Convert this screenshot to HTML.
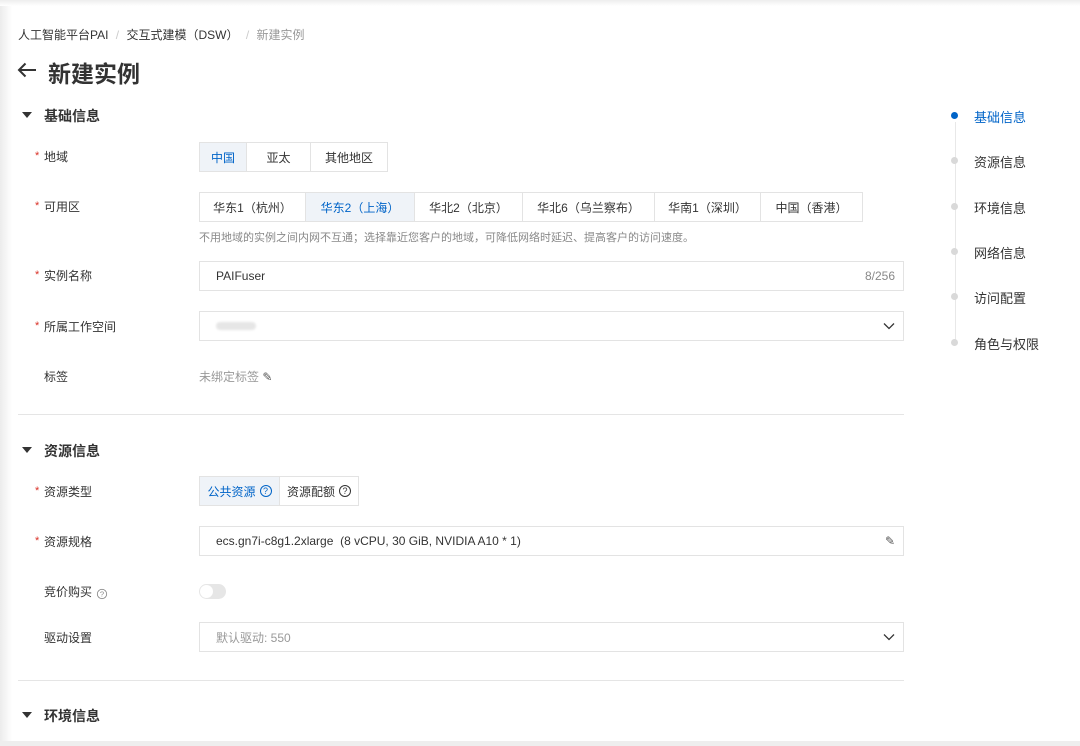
<!DOCTYPE html>
<html><head><meta charset="utf-8"><style>
*{margin:0;padding:0;box-sizing:border-box}
body{width:1080px;height:746px;overflow:hidden;background:#fff;font-family:"Liberation Sans","Noto Sans CJK SC",sans-serif;color:#333;position:relative;font-size:12px}
.a{position:absolute;white-space:nowrap}
.lbl{position:absolute;left:44px;font-size:12px;color:#333}
.star{position:absolute;left:35px;color:#d93026;font-size:11px}
.sec{position:absolute;left:44px;font-size:14px;font-weight:bold;color:#333}
.tri{position:absolute;left:22px;width:0;height:0;border-left:5px solid transparent;border-right:5px solid transparent;border-top:6px solid #333}
.seg{position:absolute;display:flex;height:30px;border:1px solid #e3e3e3}
.seg div{border-right:1px solid #e3e3e3;display:flex;align-items:center;justify-content:center;font-size:12px;color:#333}
.seg div:last-child{border-right:none}
.seg .on{background:#eff3f8;color:#0064c8}
.inp{position:absolute;left:199px;width:705px;height:30px;border:1px solid #e3e3e3;font-size:12px;padding-left:16px;display:flex;align-items:center}
.hr{position:absolute;left:18px;width:886px;height:1px;background:#e5e5e5}
.nav{position:absolute;left:974px;font-size:13px;color:#333}
.dot{position:absolute;left:951px;width:7px;height:7px;border-radius:50%;background:#d9d9d9}
.q{display:inline-block;width:12px;height:12px;border:1px solid currentColor;border-radius:50%;font-size:9px;line-height:10px;text-align:center;margin-left:4px;vertical-align:-1px}
</style></head><body>
<div class="a" style="left:0;top:0;width:12px;height:746px;background:linear-gradient(90deg,#ececec,#fff)"></div>
<div class="a" style="left:0;top:0;width:1080px;height:6px;background:linear-gradient(#eee,#fff)"></div>
<div class="a" style="left:18px;top:26px;font-size:12px;color:#333">人工智能平台PAI <span style="color:#ccc;margin:0 4px">/</span> 交互式建模（DSW） <span style="color:#ccc;margin:0 4px">/</span> <span style="color:#999">新建实例</span></div>
<svg class="a" style="left:17px;top:62px" width="20" height="16" viewBox="0 0 20 16"><path d="M19 8H2M8.5 1.5L2 8l6.5 6.5" fill="none" stroke="#333" stroke-width="2"/></svg>
<div class="a" style="left:48px;top:55px;font-size:23px;font-weight:bold;color:#333">新建实例</div>

<div class="tri" style="top:112px"></div><div class="sec" style="top:106px">基础信息</div>
<div class="star" style="top:150px">*</div><div class="lbl" style="top:148px">地域</div>
<div class="seg" style="left:199px;top:142px"><div class="on" style="width:47px">中国</div><div style="width:64px">亚太</div><div style="width:76px">其他地区</div></div>
<div class="star" style="top:200px">*</div><div class="lbl" style="top:198px">可用区</div>
<div class="seg" style="left:199px;top:192px"><div style="width:106px">华东1（杭州）</div><div class="on" style="width:109px">华东2（上海）</div><div style="width:108px">华北2（北京）</div><div style="width:132px">华北6（乌兰察布）</div><div style="width:106px">华南1（深圳）</div><div style="width:101px">中国（香港）</div></div>
<div class="a" style="left:199px;top:229px;font-size:11px;color:#888">不用地域的实例之间内网不互通；选择靠近您客户的地域，可降低网络时延迟、提高客户的访问速度。</div>
<div class="star" style="top:269px">*</div><div class="lbl" style="top:267px">实例名称</div>
<div class="inp" style="top:261px">PAIFuser<span style="position:absolute;right:8px;color:#888">8/256</span></div>
<div class="star" style="top:320px">*</div><div class="lbl" style="top:318px">所属工作空间</div>
<div class="inp" style="top:311px"><span style="display:inline-block;width:40px;height:8px;background:#e6e6e6;border-radius:4px;filter:blur(1px)"></span><svg style="position:absolute;right:8px" width="12" height="8" viewBox="0 0 12 8"><path d="M1 1.5l5 5 5-5" fill="none" stroke="#333" stroke-width="1.3"/></svg></div>
<div class="lbl" style="top:368px">标签</div>
<div class="a" style="left:199px;top:368px;font-size:12px;color:#999">未绑定标签 <span style="color:#555">✎</span></div>
<div class="hr" style="top:414px"></div>

<div class="tri" style="top:447px"></div><div class="sec" style="top:441px">资源信息</div>
<div class="star" style="top:485px">*</div><div class="lbl" style="top:483px">资源类型</div>
<div class="seg" style="left:199px;top:476px"><div class="on" style="width:80px">公共资源<span class="q">?</span></div><div style="width:78px">资源配额<span class="q">?</span></div></div>
<div class="star" style="top:535px">*</div><div class="lbl" style="top:533px">资源规格</div>
<div class="inp" style="top:526px">ecs.gn7i-c8g1.2xlarge&nbsp;&nbsp;(8 vCPU, 30 GiB, NVIDIA A10 * 1)<span style="position:absolute;right:8px;color:#555">✎</span></div>
<div class="lbl" style="top:583px">竞价购买<span class="q" style="color:#888;transform:scale(.85)">?</span></div>
<div class="a" style="left:199px;top:584px;width:27px;height:15px;border-radius:8px;background:#e6e6e6"><div style="position:absolute;left:1px;top:1px;width:13px;height:13px;border-radius:50%;background:#fff"></div></div>
<div class="lbl" style="top:629px">驱动设置</div>
<div class="inp" style="top:622px;color:#999">默认驱动: 550<svg style="position:absolute;right:8px" width="12" height="8" viewBox="0 0 12 8"><path d="M1 1.5l5 5 5-5" fill="none" stroke="#333" stroke-width="1.3"/></svg></div>
<div class="hr" style="top:680px"></div>
<div class="tri" style="top:712px"></div><div class="sec" style="top:706px">环境信息</div>
<div class="a" style="left:0;top:741px;width:1080px;height:5px;background:#eee"></div>

<div class="a" style="left:955px;top:122px;width:1px;height:220px;background:#e8e8e8"></div>
<div class="dot" style="top:112px;background:#0064c8"></div><div class="nav" style="top:107px;color:#0064c8">基础信息</div>
<div class="dot" style="top:157px"></div><div class="nav" style="top:152px">资源信息</div>
<div class="dot" style="top:203px"></div><div class="nav" style="top:198px">环境信息</div>
<div class="dot" style="top:248px"></div><div class="nav" style="top:243px">网络信息</div>
<div class="dot" style="top:293px"></div><div class="nav" style="top:288px">访问配置</div>
<div class="dot" style="top:339px"></div><div class="nav" style="top:334px">角色与权限</div>
</body></html>
